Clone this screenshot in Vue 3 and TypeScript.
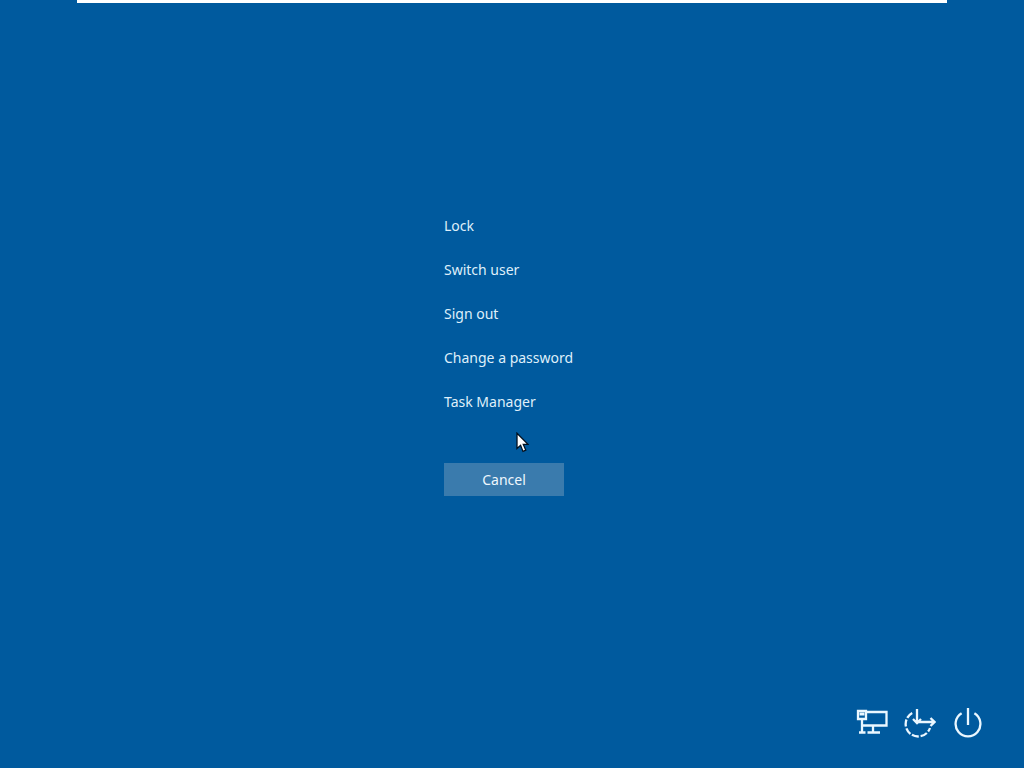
<script setup lang="ts">
const items: string[] = ['Lock', 'Switch user', 'Sign out', 'Change a password', 'Task Manager']
</script>

<template>
  <div class="screen">
    <div class="topbar"></div>
    <main class="center">
      <nav class="menu">
        <a v-for="item in items" :key="item" class="item">{{ item }}</a>
      </nav>
      <button class="cancel" type="button">Cancel</button>
      <svg class="cursor" width="14" height="22" viewBox="0 0 14 22">
        <path d="M2 1.2V16.6L5.6 13.3L8 19.4L10.8 18.2L8.3 12.4H13Z" fill="#fff" stroke="#00101f" stroke-width="1.3" />
      </svg>
    </main>
    <footer class="tray">
      <svg class="icon" width="32" height="30" viewBox="0 0 32 30" fill="none" stroke="#eaf7ff" stroke-width="2.3">
        <path d="M9.5 4H30.5V17.5H6" />
        <path d="M2 3H10V11H2Z" />
        <path d="M3.5 4.5H8.5V7.5H3.5Z" fill="#eaf7ff" stroke="none" />
        <path d="M6 11V24.5M3 24.5H9.5" />
        <path d="M17 17.5V24M11.5 24.5H24" />
      </svg>
      <svg class="icon" width="32" height="30" viewBox="0 0 32 30" fill="none" stroke="#eaf7ff" stroke-width="2.3">
        <path d="M8.2 5A12.5 12.5 0 1 0 26 20" stroke-dasharray="7 1.8" />
        <path d="M13 1V15M9 11L13 15L17 11" />
        <path d="M13 14H30.5M26.5 10L30.5 14L26.5 18" />
      </svg>
      <svg class="icon" width="30" height="30" viewBox="0 0 30 30" fill="none" stroke="#eaf7ff" stroke-width="2.3">
        <path d="M16 0V17" />
        <path d="M9.6 5.3A12.4 12.4 0 1 0 22.4 5.3" />
      </svg>
    </footer>
  </div>
</template>

<style scoped>
.screen {
  position: relative;
  width: 1024px;
  height: 768px;
  background: #005a9e;
  display: flex;
  flex-direction: column;
  overflow: hidden;
  font-family: "Noto Sans", "Open Sans", sans-serif;
  color: #fff;
}
.topbar {
  height: 3px;
  margin: 0 77px;
  background: #fff;
}
.center {
  position: relative;
  margin: 211px 0 0 444px;
  flex: 1;
}
.menu {
  display: flex;
  flex-direction: column;
  gap: 20px;
}
.item {
  height: 24px;
  line-height: 24px;
  font-size: 14px;
  color: #dfeffa;
}
.cancel {
  display: block;
  width: 120px;
  height: 33px;
  margin-top: 49px;
  padding: 0;
  border: 0;
  background: #3a7bad;
  color: #eef7fd;
  font: inherit;
  font-size: 14px;
}
.cursor {
  position: absolute;
  left: 71px;
  top: 218px;
}
.tray {
  display: flex;
  justify-content: flex-end;
  align-items: flex-start;
  gap: 16px;
  padding: 0 42px 30px 0;
}
.icon {
  display: block;
}
</style>
<style>
html, body { margin: 0; background: #005a9e; }
</style>
